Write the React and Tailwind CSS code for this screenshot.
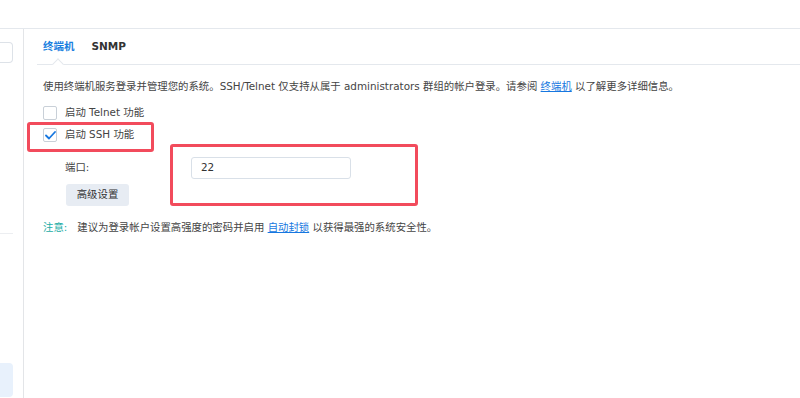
import React from 'react';

const font = { fontFamily: '"DejaVu Sans", "Noto Sans CJK SC", sans-serif' };

const Checkbox = ({ checked }) => (
    <span className="flex h-[14px] w-[14px] items-center justify-center rounded-[2px] border border-[#c9d0d8] bg-white">
        {checked && (
            <svg width="11" height="9" viewBox="0 0 11 9" fill="none">
                <path d="M1 4.5 L4 7.5 L10 1" stroke="#1677e0" strokeWidth="1.8" strokeLinecap="round" strokeLinejoin="round" />
            </svg>
        )}
    </span>
);

const App = () => {
    return (
        <div className="flex h-[398px] w-[800px] flex-col overflow-hidden bg-white text-[10.4px] text-[#444]" style={font}>
            {/* top header */}
            <div className="h-[29px] shrink-0 border-b border-[#e4e8ed]"></div>

            <div className="flex flex-1">
                {/* sidebar (cut off) */}
                <div className="flex w-[24px] shrink-0 flex-col border-r border-[#e3e5e8]">
                    <div className="mt-[13px] h-[21px] w-[13px] rounded-r-[4px] border border-l-0 border-[#dde2e8]"></div>
                    <div className="mt-[170px] w-[13px] border-t border-[#eceef1]"></div>
                    <div className="mt-[129px] h-[34px] w-[13px] rounded-r-[4px] bg-[#e8f1fc]"></div>
                </div>

                {/* main content */}
                <div className="relative flex-1 pl-[13px]">
                    {/* tabs */}
                    <div className="relative flex h-[36px] items-center gap-[17px] border-b border-[#e4e8ed] pl-[6px]">
                        <span className="text-[10.5px] font-semibold text-[#1a7fe0]">终端机</span>
                        <span className="text-[10.5px] font-bold text-[#333]">SNMP</span>
                        <span className="absolute left-[17px] top-[31px] h-[8px] w-[8px] rotate-45 border-l border-t border-[#e4e8ed] bg-white"></span>
                    </div>

                    <div className="pl-[6px]">
                        <p className="mt-[13px] h-[16px] whitespace-nowrap leading-[16px]">
                            使用终端机服务登录并管理您的系统。SSH/Telnet 仅支持从属于 administrators 群组的帐户登录。请参阅{' '}
                            <span className="text-[#1677e0] underline">终端机</span> 以了解更多详细信息。
                        </p>

                        <div className="mt-[12px] flex h-[14px] items-center gap-[8px]">
                            <Checkbox />
                            <span>启动 Telnet 功能</span>
                        </div>

                        <div className="mt-[8px] flex h-[14px] items-center gap-[8px]">
                            <Checkbox checked />
                            <span>启动 SSH 功能</span>
                        </div>

                        <div className="mt-[15px] flex h-[22px] items-center pl-[22px]">
                            <span className="w-[126px]">端口:</span>
                            <div className="flex h-[22px] w-[160px] items-center rounded-[3px] border border-[#d9e0e8] pl-[9px] text-[#333]">22</div>
                        </div>

                        <div className="ml-[23px] mt-[5px] flex h-[22px] w-[63px] items-center justify-center rounded-[3px] bg-[#e7ecf3] text-[#333]">
                            高级设置
                        </div>

                        <p className="mt-[13px] h-[16px] whitespace-nowrap leading-[16px]">
                            <span className="mr-[10px] text-[#22ada6]">注意:</span>
                            建议为登录帐户设置高强度的密码并启用{' '}
                            <span className="text-[#1677e0] underline">自动封锁</span> 以获得最强的系统安全性。
                        </p>
                    </div>

                    {/* annotation boxes */}
                    <div className="absolute left-[3px] top-[93px] h-[30px] w-[127px] rounded-[3px] border-[3px] border-[#f24b5c]"></div>
                    <div className="absolute left-[146px] top-[115px] h-[62px] w-[248px] rounded-[3px] border-[3px] border-[#f24b5c]"></div>
                </div>
            </div>
        </div>
    );
};

export default App;
